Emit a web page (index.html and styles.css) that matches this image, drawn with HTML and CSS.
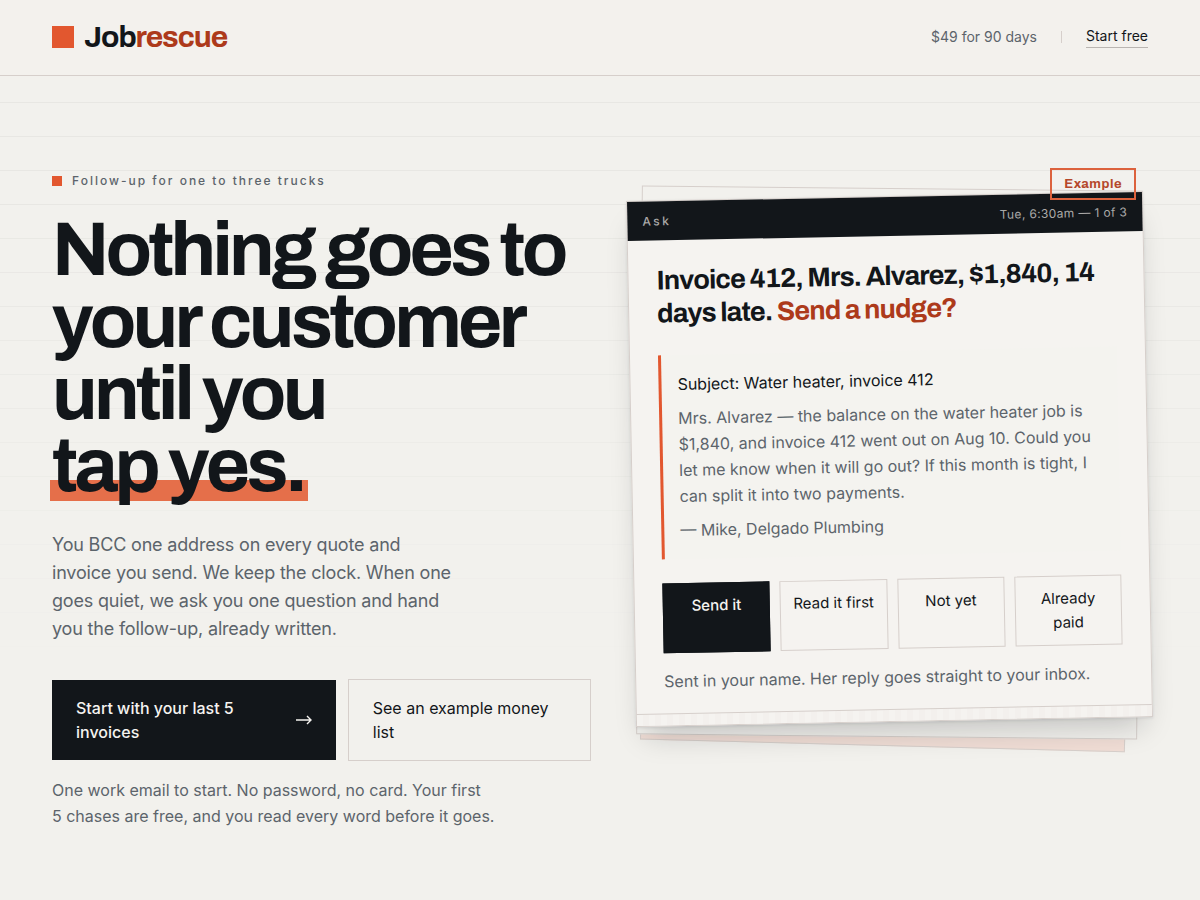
FILE: index.html
```
<!DOCTYPE html>
<html lang="en">
<head>
    <meta charset="UTF-8">
    <meta name="viewport" content="width=device-width, initial-scale=1.0">
    <title>Jobrescue</title>
    <link rel="stylesheet" href="styles.css">
</head>
<body>
    <header class="site-header">
        <a class="logo" href="#"><span class="logo-mark"></span><span>Job<em>rescue</em></span></a>
        <nav class="site-nav">
            <span class="price">$49 for 90 days</span>
            <span class="nav-divider"></span>
            <a class="nav-link" href="#start">Start free</a>
        </nav>
    </header>

    <main class="hero">
        <section class="pitch">
            <p class="eyebrow">Follow-up for one to three trucks</p>
            <h1>Nothing goes to your customer until you <br><span class="marked">tap yes.</span></h1>
            <p class="lede">You BCC one address on every quote and invoice you send. We keep the clock. When one goes quiet, we ask you one question and hand you the follow-up, already written.</p>
            <div class="cta-row">
                <a class="cta cta-primary" href="#start">
                    <span>Start with your last 5 invoices</span>
                    <svg width="18" height="12" viewBox="0 0 18 12" fill="none" stroke="currentColor" stroke-width="1.4" aria-hidden="true"><path d="M2 6h15M13 2l4 4-4 4"/></svg>
                </a>
                <a class="cta cta-ghost" href="#example">See an example money list</a>
            </div>
            <p class="fine">One work email to start. No password, no card. Your first 5&nbsp;chases are free, and you read every word before it goes.</p>
        </section>

        <section class="stack" id="example">
            <div class="sheet sheet-back"></div>
            <div class="sheet sheet-mid"></div>
            <article class="card">
                <div class="card-head">
                    <span class="card-kind">Ask</span>
                    <span class="card-time">Tue, 6:30am — 1 of 3</span>
                </div>
                <div class="card-body">
                    <h2>Invoice 412, Mrs. Alvarez, $1,840, 14 days late. <em>Send a nudge?</em></h2>
                    <blockquote class="draft">
                        <p class="subject">Subject: Water heater, invoice 412</p>
                        <p>Mrs. Alvarez — the balance on the water heater job is $1,840, and invoice 412 went out on Aug 10. Could you let me know when it will go out? If this month is tight, I can split it into two payments.</p>
                        <p>— Mike, Delgado Plumbing</p>
                    </blockquote>
                    <div class="answers">
                        <button class="answer answer-yes" type="button">Send it</button>
                        <button class="answer" type="button">Read it first</button>
                        <button class="answer" type="button">Not yet</button>
                        <button class="answer" type="button">Already paid</button>
                    </div>
                    <p class="card-note">Sent in your name. Her reply goes straight to your inbox.</p>
                </div>
                <div class="card-edge"></div>
            </article>
            <span class="stamp">Example</span>
        </section>
    </main>
</body>
</html>
```
FILE: styles.css
```
:root {
    --paper: #f2f1ed;
    --card: #f5f3f0;
    --ink: #12161a;
    --muted: #5c646b;
    --orange: #e2572f;
    --rust: #ad3a1b;
    --line: #d6cfcb;
}

* {
    margin: 0;
    padding: 0;
    box-sizing: border-box;
}

body {
    position: relative;
    min-height: 100vh;
    background: var(--paper);
    color: var(--ink);
    font-family: Inter, "Liberation Sans", sans-serif;
    font-size: 16px;
    line-height: 26px;
}

/* ruled paper, fading out down the page */
body::before {
    content: "";
    position: absolute;
    inset: 0;
    z-index: -1;
    height: 700px;
    background: repeating-linear-gradient(to bottom, #e8e7e3 0 1px, transparent 1px 34px);
    -webkit-mask-image: linear-gradient(to bottom, #000 30%, transparent 95%);
    mask-image: linear-gradient(to bottom, #000 30%, transparent 95%);
}

a {
    color: inherit;
    text-decoration: none;
}

em {
    font-style: normal;
    color: var(--rust);
}

h1, h2, .logo, .stamp {
    font-family: Archivo, "Liberation Sans", Arial, sans-serif;
    font-weight: 700;
}

/* header */
.site-header {
    display: flex;
    align-items: center;
    justify-content: space-between;
    height: 76px;
    padding: 0 52px 2px;
    background: #f3f1ed;
    border-bottom: 1px solid var(--line);
}

.logo {
    display: flex;
    align-items: center;
    gap: 10px;
    font-size: 30px;
    line-height: 36px;
    letter-spacing: -0.035em;
}

.logo-mark {
    width: 22px;
    height: 22px;
    background: var(--orange);
}

.site-nav {
    display: flex;
    align-items: center;
    gap: 24px;
    font-size: 14px;
    line-height: 22px;
}

.price {
    color: var(--muted);
}

.nav-divider {
    width: 1px;
    height: 12px;
    background: var(--line);
}

.nav-link {
    border-bottom: 1px solid #b9b5b1;
}

/* hero */
.hero {
    display: grid;
    grid-template-columns: minmax(0, 539fr) minmax(0, 517fr);
    gap: 40px;
    align-items: start;
    padding: 96px 52px 72px;
}

.eyebrow {
    display: flex;
    align-items: center;
    gap: 10px;
    color: var(--muted);
    font-size: 12px;
    font-weight: 500;
    line-height: 18px;
    letter-spacing: 2px;
}

.eyebrow::before {
    content: "";
    width: 10px;
    height: 10px;
    background: var(--orange);
}

h1 {
    margin-top: 24px;
    font-size: 76px;
    line-height: 72px;
    letter-spacing: -0.05em;
}

.marked {
    position: relative;
    z-index: 0;
    white-space: nowrap;
}

.marked::after {
    content: "";
    position: absolute;
    left: -2px;
    right: -4px;
    bottom: 6px;
    z-index: -1;
    height: 21px;
    background: #e56f4a;
}

.lede {
    max-width: 400px;
    margin-top: 29px;
    color: var(--muted);
    font-size: 18px;
    line-height: 28px;
    letter-spacing: -0.01em;
}

.cta-row {
    display: grid;
    grid-template-columns: 7fr 6fr;
    gap: 12px;
    align-items: center;
    margin-top: 36px;
}

.cta {
    display: flex;
    align-items: center;
    justify-content: space-between;
    gap: 40px;
    padding: 16px 24px;
    line-height: 24px;
}

.cta-primary {
    background: var(--ink);
    color: var(--card);
    font-weight: 500;
}

.cta-primary svg {
    flex: none;
}

.cta-ghost {
    border: 1px solid var(--line);
}

.fine {
    max-width: 450px;
    margin-top: 16px;
    color: var(--muted);
}

/* paper stack */
.stack {
    position: relative;
    margin-top: 24px;
}

.sheet {
    position: absolute;
    border: 1px solid var(--line);
}

.sheet-back {
    inset: 8px 16px -24px;
    background: #f0ddd5;
    transform: rotate(1.5deg);
}

.sheet-mid {
    inset: -8px 8px -15px;
    background: var(--paper);
    transform: rotate(0.6deg);
}

.card {
    position: relative;
    background: var(--card);
    border: 1px solid var(--line);
    box-shadow: 0 18px 30px -10px rgba(18, 22, 26, 0.22), 0 1px 3px rgba(18, 22, 26, 0.1);
    transform: rotate(-1.1deg);
}

.card-head {
    display: flex;
    align-items: center;
    justify-content: space-between;
    height: 39px;
    padding: 0 15px;
    background: var(--ink);
    color: #aaa9a8;
    font-size: 12px;
}

.card-kind {
    font-weight: 500;
    letter-spacing: 0.2em;
}

.card-time {
    letter-spacing: 0.03em;
}

.card-body {
    padding: 24px 28px 19px;
}

h2 {
    font-size: 27px;
    line-height: 33px;
    letter-spacing: -0.03em;
}

.draft {
    display: grid;
    gap: 8px;
    margin-top: 25px;
    padding: 16px 12px 16px 16px;
    border-left: 3px solid var(--orange);
    background: #f4f3ef;
    color: var(--muted);
}

.subject {
    color: var(--ink);
}

.answers {
    display: grid;
    grid-template-columns: repeat(4, minmax(0, 1fr));
    gap: 10px;
    margin-top: 24px;
}

.answer {
    display: flex;
    justify-content: center;
    align-items: flex-start;
    padding: 10px 6px;
    border: 1px solid var(--line);
    background: transparent;
    color: var(--ink);
    font: inherit;
    font-size: 15px;
    line-height: 24px;
    cursor: pointer;
}

.answer:last-child {
    padding: 10px 20px;
}

.answer-yes {
    border-color: var(--ink);
    background: var(--ink);
    color: var(--card);
    font-weight: 500;
}

.card-note {
    margin-top: 15px;
    color: var(--muted);
}

.card-edge {
    height: 12px;
    border-top: 1px solid var(--line);
    background: repeating-linear-gradient(90deg, #f5f3f0 0 6px, #f3f0ed 6px 12px);
}

.stamp {
    position: absolute;
    top: -28px;
    right: 12px;
    padding: 5px 12px;
    border: 2px solid #dc623d;
    color: #b5482b;
    font-size: 13px;
    line-height: 18px;
    letter-spacing: 0.04em;
}

@media (max-width: 900px) {
    .hero {
        grid-template-columns: minmax(0, 1fr);
        padding: 48px 24px;
    }

    h1 {
        font-size: 52px;
        line-height: 52px;
    }
}
```
